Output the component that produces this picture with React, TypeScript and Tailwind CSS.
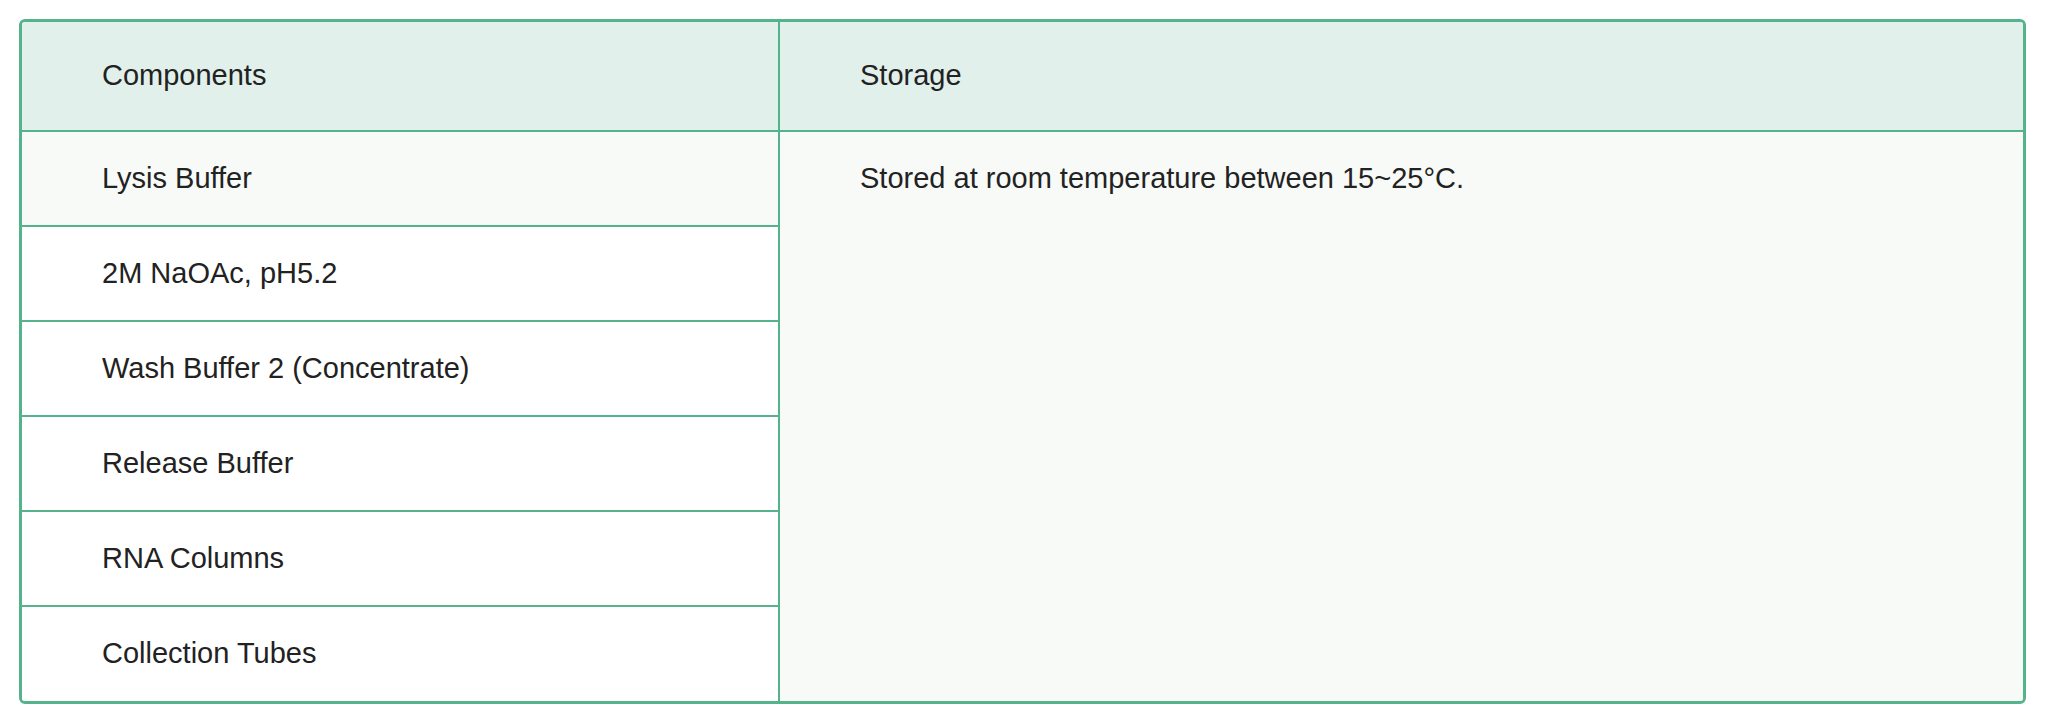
const components = [
  "Lysis Buffer",
  "2M NaOAc, pH5.2",
  "Wash Buffer 2 (Concentrate)",
  "Release Buffer",
  "RNA Columns",
  "Collection Tubes",
];

export default function App() {
  return (
    <main className="min-h-screen bg-white pt-[19px] pl-[19px] font-['Liberation_Sans',Arial,sans-serif] text-[29px] text-[#222222]">
      <div className="flex w-[2007px] overflow-hidden rounded-[6px] border-[3px] border-[#55b38c]">
        {/* components column */}
        <div className="flex w-[756px] flex-col">
          <div className="flex h-[110px] items-center border-b-2 border-[#55b38c] bg-[#e1f0eb] pl-[80px]">
            Components
          </div>
          {components.map((name, i) => (
            <div
              key={name}
              className={
                "flex items-center pl-[80px] " +
                (i === 0 ? "bg-[#f8faf8] " : "bg-white ") +
                (i < components.length - 1 ? "h-[95px] border-b-2 border-[#55b38c]" : "h-[94px]")
              }
            >
              {name}
            </div>
          ))}
        </div>

        {/* storage column */}
        <div className="flex flex-1 flex-col border-l-2 border-[#55b38c]">
          <div className="flex h-[110px] items-center border-b-2 border-[#55b38c] bg-[#e1f0eb] pl-[80px]">
            Storage
          </div>
          <div className="flex-1 bg-[#f8faf8] pl-[80px]">
            <div className="flex h-[93px] items-center">
              Stored at room temperature between 15~25°C.
            </div>
          </div>
        </div>
      </div>
    </main>
  );
}
